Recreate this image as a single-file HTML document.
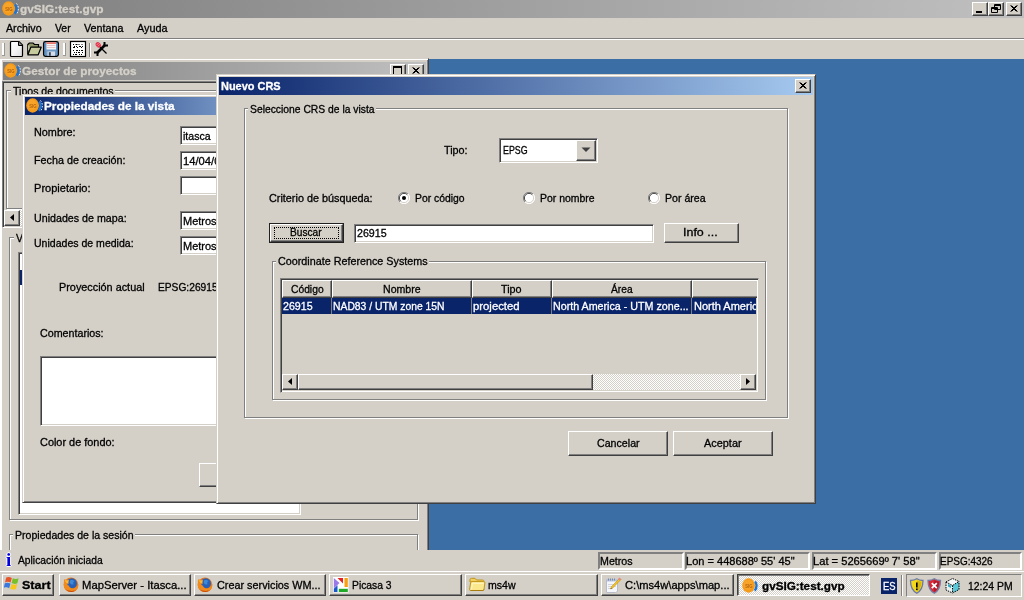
<!DOCTYPE html>
<html>
<head>
<meta charset="utf-8">
<title>gvSIG:test.gvp</title>
<style>
html,body{margin:0;padding:0;}
body{width:1024px;height:600px;overflow:hidden;position:relative;background:#d4d0c8;
 font-family:"Liberation Sans",sans-serif;font-size:11px;color:#000;line-height:13px;}
#root{position:absolute;left:0;top:0;width:1024px;height:600px;will-change:transform;}
.a{position:absolute;box-sizing:border-box;}
.t{position:absolute;white-space:nowrap;line-height:13px;height:13px;transform-origin:0 50%;-webkit-text-stroke:.3px;}
.b{font-weight:bold;}
.btn{position:absolute;box-sizing:border-box;background:#d4d0c8;
 border:1px solid;border-color:#fff #404040 #404040 #fff;
 box-shadow:inset -1px -1px 0 #808080, inset 1px 1px 0 #d4d0c8;}
.tbtn{position:absolute;box-sizing:border-box;background:#d4d0c8;
 border:1px solid;border-color:#fff #404040 #404040 #fff;
 box-shadow:inset -1px -1px 0 #808080;}
.fld{position:absolute;box-sizing:border-box;background:#fff;
 border:1px solid;border-color:#808080 #fff #fff #808080;
 box-shadow:inset 1px 1px 0 #404040, inset -1px -1px 0 #d4d0c8;}
.grp{position:absolute;box-sizing:border-box;border:1px solid #808080;
 box-shadow:1px 1px 0 #fff, inset 1px 1px 0 #fff;}
.sunk{position:absolute;box-sizing:border-box;border:1px solid;border-color:#808080 #fff #fff #808080;}
.win{position:absolute;box-sizing:border-box;background:#d4d0c8;
 border:1px solid;border-color:#d4d0c8 #404040 #404040 #d4d0c8;
 box-shadow:inset 1px 1px 0 #fff, inset -1px -1px 0 #808080;}
</style>
</head>
<body>
<div id="root">
<div class="a" style="left:0px;top:0px;width:1024px;height:18px;background:linear-gradient(90deg,#808080,#c0c0c0);"></div>
<svg class="a" style="left:2px;top:1px;" width="18" height="16" viewBox="0 0 18 16">
<ellipse cx="6.600" cy="7.500" rx="6.400" ry="7.200" fill="#f59b1c"/><ellipse cx="6" cy="6.800" rx="4.500" ry="5" fill="#f8a428"/>
<text x="3.200" y="10.100" font-family="Liberation Sans,sans-serif" font-size="5.500" font-weight="bold" fill="#b4620e" textLength="7.200" lengthAdjust="spacingAndGlyphs">SIG</text>
<path d="M13 3.600C15.200 5.500 15 10 12.700 12.600" stroke="#1c74d8" stroke-width="2.400" fill="none"/>
<path d="M14.400 2.400C17.200 5.500 17 9.800 14.600 13" stroke="#dce9f8" stroke-width="1" stroke-dasharray="1.600 1.400" fill="none"/>
</svg>
<div class="t b" style="left:20px;top:3px;color:#d4d0c8;transform:scaleX(1.0770);">gvSIG:test.gvp</div>
<div class="btn" style="left:972px;top:2px;width:16px;height:14px;"><div class="a" style="left:3px;top:8px;width:6px;height:2px;background:#000;"></div></div>
<div class="btn" style="left:988px;top:2px;width:16px;height:14px;"><svg class="a" style="left:0;top:0" width="14" height="12"><path d="M5.5 1.5h6v5h-6z M5 2.5h7 M2.5 4.5h6v5h-6z M2 5.5h7" stroke="#000" fill="#d4d0c8" stroke-width="1"/></svg></div>
<div class="btn" style="left:1006px;top:2px;width:16px;height:14px;"><svg class="a" style="left:0;top:0" width="14" height="12"><path d="M3.500 2.500l6 6M4.500 2.500l6 6M9.500 2.500l-6 6M10.500 2.500l-6 6" stroke="#000" stroke-width="1"/></svg></div>
<div class="t" style="left:6px;top:22px;transform:scaleX(0.9704);">Archivo</div>
<div class="t" style="left:55px;top:22px;transform:scaleX(0.9446);">Ver</div>
<div class="t" style="left:84px;top:22px;transform:scaleX(0.9808);">Ventana</div>
<div class="t" style="left:137px;top:22px;transform:scaleX(0.9871);">Ayuda</div>
<div class="a" style="left:0px;top:38px;width:1024px;height:1px;background:#808080;"></div>
<div class="a" style="left:0px;top:39px;width:1024px;height:1px;background:#fff;"></div>
<svg class="a" style="left:0;top:39px" width="120" height="20" viewBox="0 0 120 20"><rect x="2" y="4" width="2" height="12" fill="#fff"/><rect x="4" y="4" width="1" height="13" fill="#9a9894"/><rect x="2" y="16" width="2" height="1" fill="#9a9894"/><defs><linearGradient id="dg" x1="0" y1="0" x2="1" y2="1"><stop offset="0" stop-color="#fff"/><stop offset=".5" stop-color="#f4f4f4"/><stop offset="1" stop-color="#dcdcdc"/></linearGradient></defs><path d="M11.500 2.500h7.500l3.500 3.500v10.500q0 1-1 1h-10q-1 0-1-1v-13q0-1 1-1z" fill="url(#dg)" stroke="#000" stroke-width="1.200"/><path d="M18.500 2.800v3.700h3.700" fill="#888" stroke="#000" stroke-width="1"/><path d="M27.800 15v-9.500l1.500-1.500h3.700l1.500 1.500h4v2.500" fill="#8c9468" stroke="#000" stroke-width="1.200"/><path d="M28.800 6.300v5" stroke="#e8ecd8" stroke-width="1"/><path d="M27.800 15.800l3-7.600h10.400l-3 7.600z" fill="#c6ca9c" stroke="#000" stroke-width="1.200" stroke-linejoin="round"/><rect x="43.600" y="2.600" width="14.800" height="14.800" rx="1.800" fill="#6f9ac6" stroke="#000" stroke-width="1.300"/><path d="M44.800 4v12M57.300 4v12" stroke="#4878a8" stroke-width="1"/><rect x="46.500" y="3.300" width="9.500" height="7.200" fill="#f6f6f6"/><rect x="46.500" y="3.300" width="9.500" height="1.600" fill="#e86a5c"/><path d="M47 6.500h8.500M47 8.500h8.500" stroke="#e4b8b8" stroke-width=".8"/><rect x="47.500" y="12.500" width="7.500" height="4.300" fill="#d8dce4"/><rect x="48.800" y="13.200" width="2" height="3.600" fill="#304868"/><rect x="63" y="4" width="2" height="12" fill="#fff"/><rect x="65" y="4" width="1" height="13" fill="#9a9894"/><rect x="63" y="16" width="2" height="1" fill="#9a9894"/><rect x="70.500" y="2.500" width="15" height="15" fill="#fff" stroke="#000" stroke-width="1.200"/><path d="M73 5.500h10" stroke="#000" stroke-dasharray="1 1.500 2 1 1 2"/><path d="M74 7.500h9" stroke="#000" stroke-dasharray="1 1 1 2 2 1"/><path d="M73 8.500h10" stroke="#000" stroke-dasharray="2 2 1 3 1 1"/><path d="M73 11.500h10" stroke="#000" stroke-dasharray="1 2 2 1 1 1 2 1"/><path d="M74 13.500h9" stroke="#000" stroke-dasharray="1 1 1 1 2 2"/><path d="M73 15.500h10" stroke="#000" stroke-dasharray="1 1 2 2 1 1 1 1"/><path d="M89.500 4v14" stroke="#808080"/><path d="M90.500 4v14" stroke="#fff"/><path d="M97 14L105 6" stroke="#000" stroke-width="2.600"/><path d="M104.500 3v3.500h3.500" stroke="#000" stroke-width="2" fill="none"/><path d="M94 13.500h3.500v3.500" stroke="#000" stroke-width="2" fill="none"/><path d="M100 8l6.500 6.500" stroke="#000" stroke-width="1.300"/><ellipse cx="98.300" cy="5.800" rx="3" ry="2.300" transform="rotate(45 98.300 5.800)" fill="#e0344c"/><path d="M96.600 6l2-2M97.800 7.400l2.200-2.200" stroke="#f8a0a8" stroke-width=".8"/></svg>
<div class="a" style="left:429px;top:59px;width:595px;height:491px;background:#3a6ea5;"></div>
<div class="win" style="left:0px;top:58px;width:429px;height:494px;"></div>
<div class="a" style="left:0px;top:59px;width:1px;height:491px;background:#fff;"></div>
<div class="a" style="left:3px;top:62px;width:423px;height:18px;background:linear-gradient(90deg,#808080,#c0c0c0);"></div>
<svg class="a" style="left:4px;top:63px;" width="18" height="16" viewBox="0 0 18 16">
<ellipse cx="6.600" cy="7.500" rx="6.400" ry="7.200" fill="#f59b1c"/><ellipse cx="6" cy="6.800" rx="4.500" ry="5" fill="#f8a428"/>
<text x="3.200" y="10.100" font-family="Liberation Sans,sans-serif" font-size="5.500" font-weight="bold" fill="#b4620e" textLength="7.200" lengthAdjust="spacingAndGlyphs">SIG</text>
<path d="M13 3.600C15.200 5.500 15 10 12.700 12.600" stroke="#1c74d8" stroke-width="2.400" fill="none"/>
<path d="M14.400 2.400C17.200 5.500 17 9.800 14.600 13" stroke="#dce9f8" stroke-width="1" stroke-dasharray="1.600 1.400" fill="none"/>
</svg>
<div class="t b" style="left:22px;top:65px;color:#d4d0c8;transform:scaleX(1.0712);">Gestor de proyectos</div>
<div class="btn" style="left:390px;top:64px;width:16px;height:14px;"><div class="a" style="left:2px;top:1px;width:9px;height:9px;border:1px solid #000;border-top-width:2px;"></div></div>
<div class="btn" style="left:408px;top:64px;width:16px;height:14px;"><svg class="a" style="left:0;top:0" width="14" height="12"><path d="M3.500 2.500l6 6M4.500 2.500l6 6M9.500 2.500l-6 6M10.500 2.500l-6 6" stroke="#000" stroke-width="1"/></svg></div>
<div class="sunk" style="left:2px;top:81px;width:424px;height:147px;border-color:#808080 #fff #fff #808080;box-shadow:inset 1px 1px 0 #404040;"></div>
<div class="grp" style="left:6px;top:90px;width:411px;height:119px;"></div>
<div class="a" style="left:11px;top:90px;width:104px;height:2px;background:#d4d0c8;"></div>
<div class="t" style="left:13px;top:85px;transform:scaleX(0.9602);">Tipos de documentos</div>
<div class="btn" style="left:4px;top:210px;width:16px;height:16px;"><svg class="a" style="left:0;top:0" width="14" height="14"><path d="M9 3v7l-4-3.500z" fill="#000"/></svg></div>
<div class="a" style="left:20px;top:210px;width:401px;height:16px;background:repeating-conic-gradient(#fff 0 25%,#d4d0c8 0 50%) 0 0/2px 2px;"></div>
<div class="grp" style="left:9px;top:237px;width:409px;height:283px;"></div>
<div class="a" style="left:14px;top:237px;width:32px;height:2px;background:#d4d0c8;"></div>
<div class="t" style="left:16px;top:232px;transform:scaleX(0.9608);">Vistas</div>
<div class="fld" style="left:18px;top:252px;width:283px;height:263px;"></div>
<div class="a" style="left:20px;top:270px;width:279px;height:15px;background:#0a246a;"></div>
<div class="grp" style="left:9px;top:534px;width:409px;height:29px;"></div>
<div class="a" style="left:13px;top:534px;width:122px;height:2px;background:#d4d0c8;"></div>
<div class="t" style="left:15px;top:529px;transform:scaleX(0.9601);">Propiedades de la sesión</div>
<div class="win" style="left:22px;top:94px;width:300px;height:409px;"></div>
<div class="a" style="left:25px;top:97px;width:294px;height:18px;background:linear-gradient(90deg,#0a246a,#a6caf0);"></div>
<svg class="a" style="left:26px;top:98px;" width="18" height="16" viewBox="0 0 18 16">
<ellipse cx="6.600" cy="7.500" rx="6.400" ry="7.200" fill="#f59b1c"/><ellipse cx="6" cy="6.800" rx="4.500" ry="5" fill="#f8a428"/>
<text x="3.200" y="10.100" font-family="Liberation Sans,sans-serif" font-size="5.500" font-weight="bold" fill="#b4620e" textLength="7.200" lengthAdjust="spacingAndGlyphs">SIG</text>
<path d="M13 3.600C15.200 5.500 15 10 12.700 12.600" stroke="#1c74d8" stroke-width="2.400" fill="none"/>
<path d="M14.400 2.400C17.200 5.500 17 9.800 14.600 13" stroke="#dce9f8" stroke-width="1" stroke-dasharray="1.600 1.400" fill="none"/>
</svg>
<div class="t b" style="left:44px;top:100px;color:#fff;transform:scaleX(1.0680);">Propiedades de la vista</div>
<div class="t" style="left:34px;top:126px;transform:scaleX(0.9861);">Nombre:</div>
<div class="fld" style="left:180px;top:126px;width:120px;height:19px;"></div>
<div class="t" style="left:183px;top:130px;transform:scaleX(0.9600);">itasca</div>
<div class="t" style="left:34px;top:154px;transform:scaleX(0.9790);">Fecha de creación:</div>
<div class="fld" style="left:180px;top:151px;width:120px;height:19px;"></div>
<div class="t" style="left:183px;top:155px;transform:scaleX(1.0180);">14/04/08</div>
<div class="t" style="left:34px;top:182px;transform:scaleX(1.0059);">Propietario:</div>
<div class="fld" style="left:180px;top:176px;width:120px;height:19px;"></div>
<div class="t" style="left:34px;top:212px;transform:scaleX(0.9706);">Unidades de mapa:</div>
<div class="fld" style="left:180px;top:211px;width:120px;height:19px;"></div>
<div class="t" style="left:183px;top:215px;transform:scaleX(0.9993);">Metros</div>
<div class="t" style="left:34px;top:237px;transform:scaleX(0.9580);">Unidades de medida:</div>
<div class="fld" style="left:180px;top:236px;width:120px;height:19px;"></div>
<div class="t" style="left:183px;top:240px;transform:scaleX(0.9993);">Metros</div>
<div class="t" style="left:59px;top:281px;transform:scaleX(0.9859);">Proyección actual</div>
<div class="t" style="left:158px;top:281px;transform:scaleX(0.9281);">EPSG:26915</div>
<div class="t" style="left:40px;top:327px;transform:scaleX(0.9722);">Comentarios:</div>
<div class="fld" style="left:40px;top:356px;width:260px;height:70px;"></div>
<div class="t" style="left:40px;top:436px;transform:scaleX(0.9918);">Color de fondo:</div>
<div class="btn" style="left:199px;top:463px;width:40px;height:24px;"></div>
<div class="win" style="left:216px;top:74px;width:600px;height:430px;"></div>
<div class="a" style="left:219px;top:77px;width:594px;height:18px;background:linear-gradient(90deg,#0a246a,#a6caf0);"></div>
<div class="t b" style="left:221px;top:80px;color:#fff;transform:scaleX(0.9949);">Nuevo CRS</div>
<div class="btn" style="left:795px;top:79px;width:16px;height:14px;"><svg class="a" style="left:0;top:0" width="14" height="12"><path d="M3.500 2.500l6 6M4.500 2.500l6 6M9.500 2.500l-6 6M10.500 2.500l-6 6" stroke="#000" stroke-width="1"/></svg></div>
<div class="grp" style="left:244px;top:108px;width:544px;height:310px;"></div>
<div class="a" style="left:248px;top:108px;width:128px;height:2px;background:#d4d0c8;"></div>
<div class="t" style="left:250px;top:103px;transform:scaleX(0.9390);">Seleccione CRS de la vista</div>
<div class="t" style="left:444px;top:144px;transform:scaleX(0.9814);">Tipo:</div>
<div class="fld" style="left:499px;top:138px;width:99px;height:25px;"></div>
<div class="btn" style="left:576px;top:140px;width:20px;height:21px;"><svg class="a" style="left:0;top:0" width="18" height="18"><path d="M4.500 6.500h9l-4.500 4.500z" fill="#404040"/></svg></div>
<div class="t" style="left:503px;top:144px;transform:scaleX(0.8045);">EPSG</div>
<div class="t" style="left:269px;top:192px;transform:scaleX(0.9849);">Criterio de búsqueda:</div>
<svg class="a" style="left:398px;top:192px" width="12" height="12" viewBox="0 0 12 12"><circle cx="6" cy="6" r="5.500" fill="#fff"/><path d="M10 2A5.500 5.500 0 0 0 2 10" stroke="#808080" fill="none"/><path d="M9.300 2.700A4.500 4.500 0 0 0 2.700 9.300" stroke="#404040" fill="none"/><path d="M2 10A5.500 5.500 0 0 0 10 2" stroke="#fff" fill="none"/><path d="M2.700 9.300A4.500 4.500 0 0 0 9.300 2.700" stroke="#d4d0c8" fill="none"/><circle cx="6" cy="6" r="2" fill="#000"/></svg>
<div class="t" style="left:415px;top:192px;transform:scaleX(0.9431);">Por código</div>
<svg class="a" style="left:523px;top:192px" width="12" height="12" viewBox="0 0 12 12"><circle cx="6" cy="6" r="5.500" fill="#fff"/><path d="M10 2A5.500 5.500 0 0 0 2 10" stroke="#808080" fill="none"/><path d="M9.300 2.700A4.500 4.500 0 0 0 2.700 9.300" stroke="#404040" fill="none"/><path d="M2 10A5.500 5.500 0 0 0 10 2" stroke="#fff" fill="none"/><path d="M2.700 9.300A4.500 4.500 0 0 0 9.300 2.700" stroke="#d4d0c8" fill="none"/></svg>
<div class="t" style="left:540px;top:192px;transform:scaleX(0.9498);">Por nombre</div>
<svg class="a" style="left:648px;top:192px" width="12" height="12" viewBox="0 0 12 12"><circle cx="6" cy="6" r="5.500" fill="#fff"/><path d="M10 2A5.500 5.500 0 0 0 2 10" stroke="#808080" fill="none"/><path d="M9.300 2.700A4.500 4.500 0 0 0 2.700 9.300" stroke="#404040" fill="none"/><path d="M2 10A5.500 5.500 0 0 0 10 2" stroke="#fff" fill="none"/><path d="M2.700 9.300A4.500 4.500 0 0 0 9.300 2.700" stroke="#d4d0c8" fill="none"/></svg>
<div class="t" style="left:665px;top:192px;transform:scaleX(0.9620);">Por área</div>
<div class="a" style="left:269px;top:223px;width:75px;height:20px;border:1px solid #202020;"></div>
<div class="btn" style="left:270px;top:224px;width:73px;height:18px;"></div>
<div class="a" style="left:274px;top:227px;width:65px;height:12px;border:1px dotted #000;"></div>
<div class="t" style="left:290px;top:226px;transform:scaleX(0.9226);">Buscar</div>
<div class="fld" style="left:354px;top:224px;width:300px;height:19px;"></div>
<div class="t" style="left:357px;top:227px;transform:scaleX(0.9675);">26915</div>
<div class="btn" style="left:664px;top:223px;width:75px;height:20px;"></div>
<div class="t" style="left:683px;top:226px;transform:scaleX(1.1315);">Info ...</div>
<div class="grp" style="left:272px;top:261px;width:494px;height:139px;"></div>
<div class="a" style="left:276px;top:261px;width:153px;height:2px;background:#d4d0c8;"></div>
<div class="t" style="left:278px;top:255px;transform:scaleX(0.9787);">Coordinate Reference Systems</div>
<div class="sunk" style="left:280px;top:278px;width:479px;height:115px;border-color:#808080 #d4d0c8 #d4d0c8 #808080;box-shadow:inset 1px 1px 0 #404040,inset -1px -1px 0 #fff;"></div>
<div class="tbtn" style="left:282px;top:280px;width:50px;height:18px;"></div>
<div class="t" style="left:291px;top:283px;transform:scaleX(0.9352);">Código</div>
<div class="tbtn" style="left:332px;top:280px;width:140px;height:18px;"></div>
<div class="t" style="left:383px;top:283px;transform:scaleX(0.9610);">Nombre</div>
<div class="tbtn" style="left:472px;top:280px;width:80px;height:18px;"></div>
<div class="t" style="left:501px;top:283px;transform:scaleX(0.9810);">Tipo</div>
<div class="tbtn" style="left:552px;top:280px;width:140px;height:18px;"></div>
<div class="t" style="left:611px;top:283px;transform:scaleX(0.9290);">Área</div>
<div class="tbtn" style="left:692px;top:280px;width:65px;height:18px;border-right:none;box-shadow:inset 0 -1px 0 #808080;"></div>
<div class="a" style="left:282px;top:298px;width:474px;height:16px;background:#0a246a;"></div>
<div class="a" style="left:331px;top:298px;width:1px;height:16px;background:#808080;"></div>
<div class="a" style="left:471px;top:298px;width:1px;height:16px;background:#808080;"></div>
<div class="a" style="left:551px;top:298px;width:1px;height:16px;background:#808080;"></div>
<div class="a" style="left:691px;top:298px;width:1px;height:16px;background:#808080;"></div>
<div class="t" style="left:283px;top:300px;color:#fff;transform:scaleX(0.9675);">26915</div>
<div class="t" style="left:333px;top:300px;color:#fff;transform:scaleX(0.9409);">NAD83 / UTM zone 15N</div>
<div class="t" style="left:473px;top:300px;color:#fff;transform:scaleX(1.0295);">projected</div>
<div class="t" style="left:553px;top:300px;color:#fff;transform:scaleX(0.9729);">North America - UTM zone...</div>
<div class="a" style="left:693px;top:298px;width:63px;height:16px;overflow:hidden;"><div class="t" style="left:1px;top:2px;color:#fff;">North America - 96</div></div>
<div class="a" style="left:282px;top:374px;width:474px;height:16px;background:repeating-conic-gradient(#fff 0 25%,#d4d0c8 0 50%) 0 0/2px 2px;"></div>
<div class="btn" style="left:282px;top:374px;width:16px;height:16px;"><svg class="a" style="left:0;top:0" width="14" height="14"><path d="M9 3v7l-4-3.500z" fill="#000"/></svg></div>
<div class="btn" style="left:298px;top:374px;width:295px;height:16px;"></div>
<div class="btn" style="left:740px;top:374px;width:16px;height:16px;"><svg class="a" style="left:0;top:0" width="14" height="14"><path d="M5 3v7l4-3.500z" fill="#000"/></svg></div>
<div class="btn" style="left:568px;top:431px;width:100px;height:25px;"></div>
<div class="t" style="left:597px;top:437px;transform:scaleX(0.9675);">Cancelar</div>
<div class="btn" style="left:673px;top:431px;width:100px;height:25px;"></div>
<div class="t" style="left:704px;top:437px;transform:scaleX(0.9915);">Aceptar</div>
<div class="a" style="left:0px;top:550px;width:1024px;height:22px;background:#d4d0c8;"></div>
<div class="t" style="left:6px;top:550px;font-family:'Liberation Serif',serif;font-weight:bold;font-size:19px;line-height:19px;height:19px;color:#0000e0;text-shadow:-1px 0 #fff,1px 0 #fff,0 -1px #fff,0 1px #fff;-webkit-text-stroke:0;">i</div>
<div class="t" style="left:18px;top:554px;transform:scaleX(0.9348);">Aplicación iniciada</div>
<div class="sunk" style="left:598px;top:552px;width:86px;height:18px;border-width:2px;"></div>
<div class="t" style="left:600px;top:555px;transform:scaleX(0.9695);">Metros</div>
<div class="sunk" style="left:685px;top:552px;width:125px;height:18px;border-width:2px;"></div>
<div class="t" style="left:686px;top:555px;transform:scaleX(1.0037);">Lon = 448688º 55' 45"</div>
<div class="sunk" style="left:812px;top:552px;width:125px;height:18px;border-width:2px;"></div>
<div class="t" style="left:813px;top:555px;transform:scaleX(1.0139);">Lat = 5265669º 7' 58"</div>
<div class="sunk" style="left:939px;top:552px;width:83px;height:18px;border-width:2px;"></div>
<div class="t" style="left:940px;top:555px;transform:scaleX(0.9054);">EPSG:4326</div>
<div class="a" style="left:0px;top:570px;width:1024px;height:30px;background:#d4d0c8;"></div>
<div class="a" style="left:0px;top:571px;width:1024px;height:1px;background:#fff;"></div>
<div class="btn" style="left:2px;top:574px;width:52px;height:22px;"></div>
<svg class="a" style="left:4px;top:576px" width="16" height="15" viewBox="0 0 16 15"><path d="M2.200 1.600C4 0.600 5.800 0.800 7.800 1.900L6.600 6.600C4.800 5.600 3 5.400 1 6.400z" fill="#e8542a"/><path d="M8.800 2.300C10.800 3.300 12.600 3.300 14.600 2.300L13.400 7.200C11.400 8.200 9.600 8.100 7.600 7.100z" fill="#78c02a"/><path d="M0.800 7.300C2.600 6.300 4.400 6.500 6.400 7.500L5.200 12.200C3.400 11.200 1.600 11 -0.300 12z" fill="#3a78e0"/><path d="M7.400 8C9.400 9 11.200 9 13.200 8.100L12 12.900C10 13.900 8.200 13.800 6.200 12.800z" fill="#f8c818"/></svg>
<div class="t b" style="left:22px;top:579px;transform:scaleX(1.1411);">Start</div>
<div class="btn" style="left:59px;top:574px;width:132px;height:22px;"></div>
<svg class="a" style="left:63px;top:577px" width="16" height="16" viewBox="0 0 16 16"><circle cx="8" cy="7.800" r="7.300" fill="#e8781a"/><circle cx="8.800" cy="6.400" r="5.200" fill="#2860b8"/><path d="M7 3.500C8.500 2.600 10.500 3 11.500 4.200C10 4.600 9.800 6 10.600 7C9.500 8 8 7.600 7.300 6.400C6.600 5.400 6.500 4.300 7 3.500z" fill="#3c8ad8"/><path d="M1 5C0.200 8 1 12 4.500 14.200C8 16 12.500 15 14.600 11.500C15.300 10 15.500 8.500 15.200 7C14.500 9.500 12.500 11.500 10 11.500C7.500 11.500 6.200 10 5.800 8.600C5 8.400 4.200 7.600 4.200 6.400C4.800 6.800 5.400 6.800 5.800 6.500C5.200 5.600 5.400 4.200 6.200 3.200C4.600 3 3 3.400 1.800 2C1 3 0.800 4 1 5z" fill="#f08a1c"/><path d="M2.500 12C5 15.500 10.500 16 13.500 12.800C11 14.500 6 14.500 2.500 12z" fill="#c84a10"/><path d="M1.800 2.500C2.600 3.600 4.200 3.600 5.800 3.600C5.200 4.400 5 5.400 5.400 6.200C4.800 6.400 4.400 6.300 4.200 6.200C3 5.800 2 4.500 1.800 2.500z" fill="#f8b838"/></svg>
<div class="t" style="left:82px;top:579px;transform:scaleX(1.0245);">MapServer - Itasca...</div>
<div class="btn" style="left:194px;top:574px;width:132px;height:22px;"></div>
<svg class="a" style="left:197px;top:577px" width="16" height="16" viewBox="0 0 16 16"><circle cx="8" cy="7.800" r="7.300" fill="#e8781a"/><circle cx="8.800" cy="6.400" r="5.200" fill="#2860b8"/><path d="M7 3.500C8.500 2.600 10.500 3 11.500 4.200C10 4.600 9.800 6 10.600 7C9.500 8 8 7.600 7.300 6.400C6.600 5.400 6.500 4.300 7 3.500z" fill="#3c8ad8"/><path d="M1 5C0.200 8 1 12 4.500 14.200C8 16 12.500 15 14.600 11.500C15.300 10 15.500 8.500 15.200 7C14.500 9.500 12.500 11.500 10 11.500C7.500 11.500 6.200 10 5.800 8.600C5 8.400 4.200 7.600 4.200 6.400C4.800 6.800 5.400 6.800 5.800 6.500C5.200 5.600 5.400 4.200 6.200 3.200C4.600 3 3 3.400 1.800 2C1 3 0.800 4 1 5z" fill="#f08a1c"/><path d="M2.500 12C5 15.500 10.500 16 13.500 12.800C11 14.500 6 14.500 2.500 12z" fill="#c84a10"/><path d="M1.800 2.500C2.600 3.600 4.200 3.600 5.800 3.600C5.200 4.400 5 5.400 5.400 6.200C4.800 6.400 4.400 6.300 4.200 6.200C3 5.800 2 4.500 1.800 2.500z" fill="#f8b838"/></svg>
<div class="t" style="left:217px;top:579px;transform:scaleX(0.9855);">Crear servicios WM...</div>
<div class="btn" style="left:329px;top:574px;width:133px;height:22px;"></div>
<svg class="a" style="left:333px;top:577px" width="16" height="16" viewBox="0 0 16 16"><rect x="0" y="0" width="15.500" height="15.500" fill="#fff"/><path d="M0.800 1v10.500L6.500 6z" fill="#9a7ae8"/><path d="M4.500 1h5.500v5.500z" fill="#e82020"/><rect x="11.500" y="1" width="3.300" height="9" fill="#f8a010"/><rect x="5.800" y="11.800" width="9" height="3.200" fill="#20a828"/><path d="M0.800 15v-3.300L4.500 8.300V15z" fill="#1858c8"/></svg>
<div class="t" style="left:352px;top:579px;transform:scaleX(0.9383);">Picasa 3</div>
<div class="btn" style="left:465px;top:574px;width:133px;height:22px;"></div>
<svg class="a" style="left:469px;top:577px" width="17" height="15" viewBox="0 0 17 15"><path d="M1 3C1 2 1.500 1.300 2.500 1.300H6L7.500 3H13.500C14.500 3 15 3.600 15 4.500V5H1z" fill="#f0d060" stroke="#c09418" stroke-width="1"/><path d="M1.500 13.500C0.800 13.500 0.500 13 0.600 12.300L1.600 5.800C1.700 5 2.200 4.600 3 4.600H14.800C15.600 4.600 16 5.100 15.900 5.900L15 12.400C14.900 13.100 14.400 13.500 13.700 13.500z" fill="#fbe88c" stroke="#c09418" stroke-width="1"/><path d="M2.500 12.500L3.300 6.200H14.500" stroke="#fff8d0" fill="none" stroke-width="1"/><path d="M1.500 13.500H13.700C14.400 13.500 14.900 13.100 15 12.400" stroke="#a87c10" fill="none"/></svg>
<div class="t" style="left:488px;top:579px;transform:scaleX(0.9605);">ms4w</div>
<div class="btn" style="left:601px;top:574px;width:133px;height:22px;"></div>
<svg class="a" style="left:605px;top:577px" width="17" height="16" viewBox="0 0 17 16"><path d="M1.500 2.500H12.500V14.500L10.500 15.500H1.500z" fill="#f4f6fa" stroke="#b8bcc8"/><rect x="2" y="2" width="10" height="2.500" fill="#b8c4dc"/><path d="M3.500 1.500v2M5.500 1.500v2M7.500 1.500v2M9.500 1.500v2" stroke="#7888a8"/><path d="M3 7.500h8M3 9.500h8M3 11.500h5" stroke="#d0d4e0"/><path d="M14.800 1.200L16 2.400L7.600 11L5.600 12L6.400 9.800z" fill="#f8c820" stroke="#b88a10" stroke-width=".6"/><path d="M14.200 0.600l1.800 1.800l-1 1l-1.800-1.800z" fill="#e88090"/><path d="M5.600 12l0.400-1.100l0.700 0.700z" fill="#403020"/></svg>
<div class="t" style="left:625px;top:579px;transform:scaleX(1.0123);">C:\ms4w\apps\map...</div>
<div class="a" style="left:737px;top:574px;width:133px;height:22px;border:1px solid;border-color:#404040 #fff #fff #404040;box-shadow:inset 1px 1px 0 #808080;background:repeating-conic-gradient(#fff 0 25%,#d4d0c8 0 50%) 0 0/2px 2px;"></div>
<svg class="a" style="left:742px;top:578px;" width="18" height="16" viewBox="0 0 18 16">
<ellipse cx="6.600" cy="7.500" rx="6.400" ry="7.200" fill="#f59b1c"/><ellipse cx="6" cy="6.800" rx="4.500" ry="5" fill="#f8a428"/>
<text x="3.200" y="10.100" font-family="Liberation Sans,sans-serif" font-size="5.500" font-weight="bold" fill="#b4620e" textLength="7.200" lengthAdjust="spacingAndGlyphs">SIG</text>
<path d="M13 3.600C15.200 5.500 15 10 12.700 12.600" stroke="#1c74d8" stroke-width="2.400" fill="none"/>
<path d="M14.400 2.400C17.200 5.500 17 9.800 14.600 13" stroke="#dce9f8" stroke-width="1" stroke-dasharray="1.600 1.400" fill="none"/>
</svg>
<div class="t b" style="left:762px;top:580px;transform:scaleX(1.0641);">gvSIG:test.gvp</div>
<div class="a" style="left:881px;top:578px;width:16px;height:16px;background:#0a246a;"></div>
<div class="t" style="left:883px;top:580px;color:#fff;transform:scaleX(0.8579);">ES</div>
<div class="a" style="left:901px;top:575px;width:1px;height:21px;background:#808080;"></div>
<div class="a" style="left:902px;top:575px;width:1px;height:21px;background:#fff;"></div>
<div class="sunk" style="left:906px;top:574px;width:116px;height:23px;"></div>
<svg class="a" style="left:909px;top:578px" width="52" height="16" viewBox="0 0 52 16"><path d="M7.800 0.800C9.500 2 11.500 2.500 14 2.500C14 8 12.500 12.500 7.800 15.300C3 12.500 1.500 8 1.500 2.500C4 2.500 6 2 7.800 0.800z" fill="#f4d81c" stroke="#6878a8" stroke-width="1.300"/><path d="M7.800 2.200C9 3 10.800 3.600 12.600 3.700C12.500 8 11.300 11.500 7.800 13.800z" fill="#d8b810"/><rect x="7" y="4.500" width="1.600" height="5" fill="#000"/><rect x="7" y="10.500" width="1.600" height="1.600" fill="#000"/><path d="M25.300 0.800C27 2 29 2.500 31.500 2.500C31.500 8 30 12.500 25.300 15.300C20.500 12.500 19 8 19 2.500C21.500 2.500 23.500 2 25.300 0.800z" fill="#d82838" stroke="#7080a8" stroke-width="1.300"/><path d="M25.300 2.200C26.500 3 28.300 3.600 30.100 3.700C30 8 28.800 11.500 25.300 13.800z" fill="#b01828"/><path d="M22.800 5.200l5 5M27.800 5.200l-5 5" stroke="#fff" stroke-width="1.700"/><path d="M37 4l6.500-3.500l6.500 3v8l-6 3.500l-7-3z" fill="#f4f8f8"/><path d="M43.500 7.500l6.500-4v8l-6 3.500z" fill="#58c8d8"/><path d="M37 4l6.500 3.500v7.500l-6.500-3z" fill="#e8f0f0"/><path d="M37 4l6.500-3.500l6.500 3M37 4v8l6.500 3l6.500-3.500v-8M37 4l6.500 3.500l6.500-4M43.500 7.500v7.500" stroke="#000" stroke-width="1" fill="none" stroke-dasharray="1.500 1"/><path d="M39 6l3 1.500v2.500l-3-1.500z" fill="#30a8c0"/></svg>
<div class="t" style="left:968px;top:580px;transform:scaleX(0.9470);">12:24 PM</div>
</div>
</body>
</html>
